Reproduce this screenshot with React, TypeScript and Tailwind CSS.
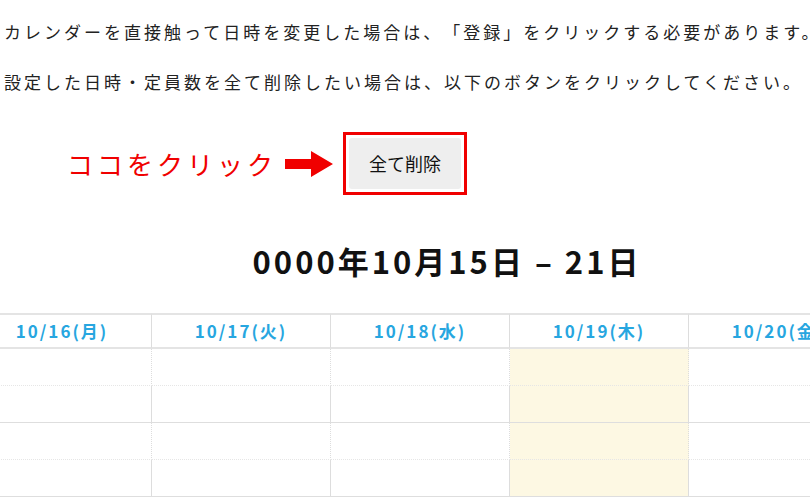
const jp = { fontFamily: '"Noto Sans CJK JP", "Noto Sans", sans-serif' };

const days = ["10/16(月)", "10/17(火)", "10/18(水)", "10/19(木)", "10/20(金)"];
const rows = ["dotted", "solid", "dotted", "solid"];

function Arrow() {
  return (
    <svg width="48" height="26" viewBox="0 0 48 26" className="block">
      <polygon points="0,8 26,8 26,0 48,13 26,26 26,18 0,18" fill="#f00000" />
    </svg>
  );
}

export default function App() {
  return (
    <main className="w-[810px] h-[498px] overflow-hidden bg-white text-[#222]" style={jp}>
      {/* --- 説明文 --- */}
      <div className="pl-[4px] pt-[19px] text-[17px] leading-[26px] tracking-[3px] whitespace-nowrap [text-spacing-trim:space-all]">
        <p>カレンダーを直接触って日時を変更した場合は、「登録」をクリックする必要があります。</p>
        <p className="mt-[24px]">設定した日時・定員数を全て削除したい場合は、以下のボタンをクリックしてください。</p>
      </div>

      {/* --- ココをクリック --- */}
      <div className="mt-[37px] flex items-center pl-[67px]">
        <span className="text-[26px] leading-none tracking-[4px] text-[#f00000]">ココをクリック</span>
        <div className="ml-[8px]">
          <Arrow />
        </div>
        <div className="ml-[10px] w-[124px] h-[63px] border-[3px] border-[#f00000] p-[3px]">
          <button className="w-full h-full rounded-[3px] bg-[#eeeeee] text-[18px] text-[#111]">全て削除</button>
        </div>
      </div>

      {/* --- タイトル --- */}
      <h2 className="mt-[46px] pl-[84px] text-center text-[31px] leading-[40px] font-bold tracking-[3px] text-[#111]">
        0000年10月15日 – 21日
      </h2>

      {/* --- カレンダー --- */}
      <div className="mt-[32px] overflow-hidden">
        <div className="ml-[-27px] grid w-[895px] grid-cols-[repeat(5,179px)]">
          {days.map((d) => (
            <div
              key={d}
              className="h-[36px] border-t-2 border-b-2 border-r border-t-[#e4e4e4] border-b-[#e4e4e4] border-r-[#dddddd] flex items-center justify-center text-[17px] font-bold tracking-[2px] text-[#27a6e0]"
            >
              {d}
            </div>
          ))}
          {rows.map((r, ri) =>
            days.map((d, ci) => (
              <div
                key={`${ri}-${d}`}
                className={
                  "h-[37px] border-r border-r-[#dddddd] border-b " +
                  (r === "dotted" ? "border-b-[#e6e6e6] border-dotted " : "border-b-[#dedede] ") +
                  (ci === 3 ? "bg-[#fdf8e3]" : "bg-white")
                }
              />
            ))
          )}
        </div>
      </div>
    </main>
  );
}
